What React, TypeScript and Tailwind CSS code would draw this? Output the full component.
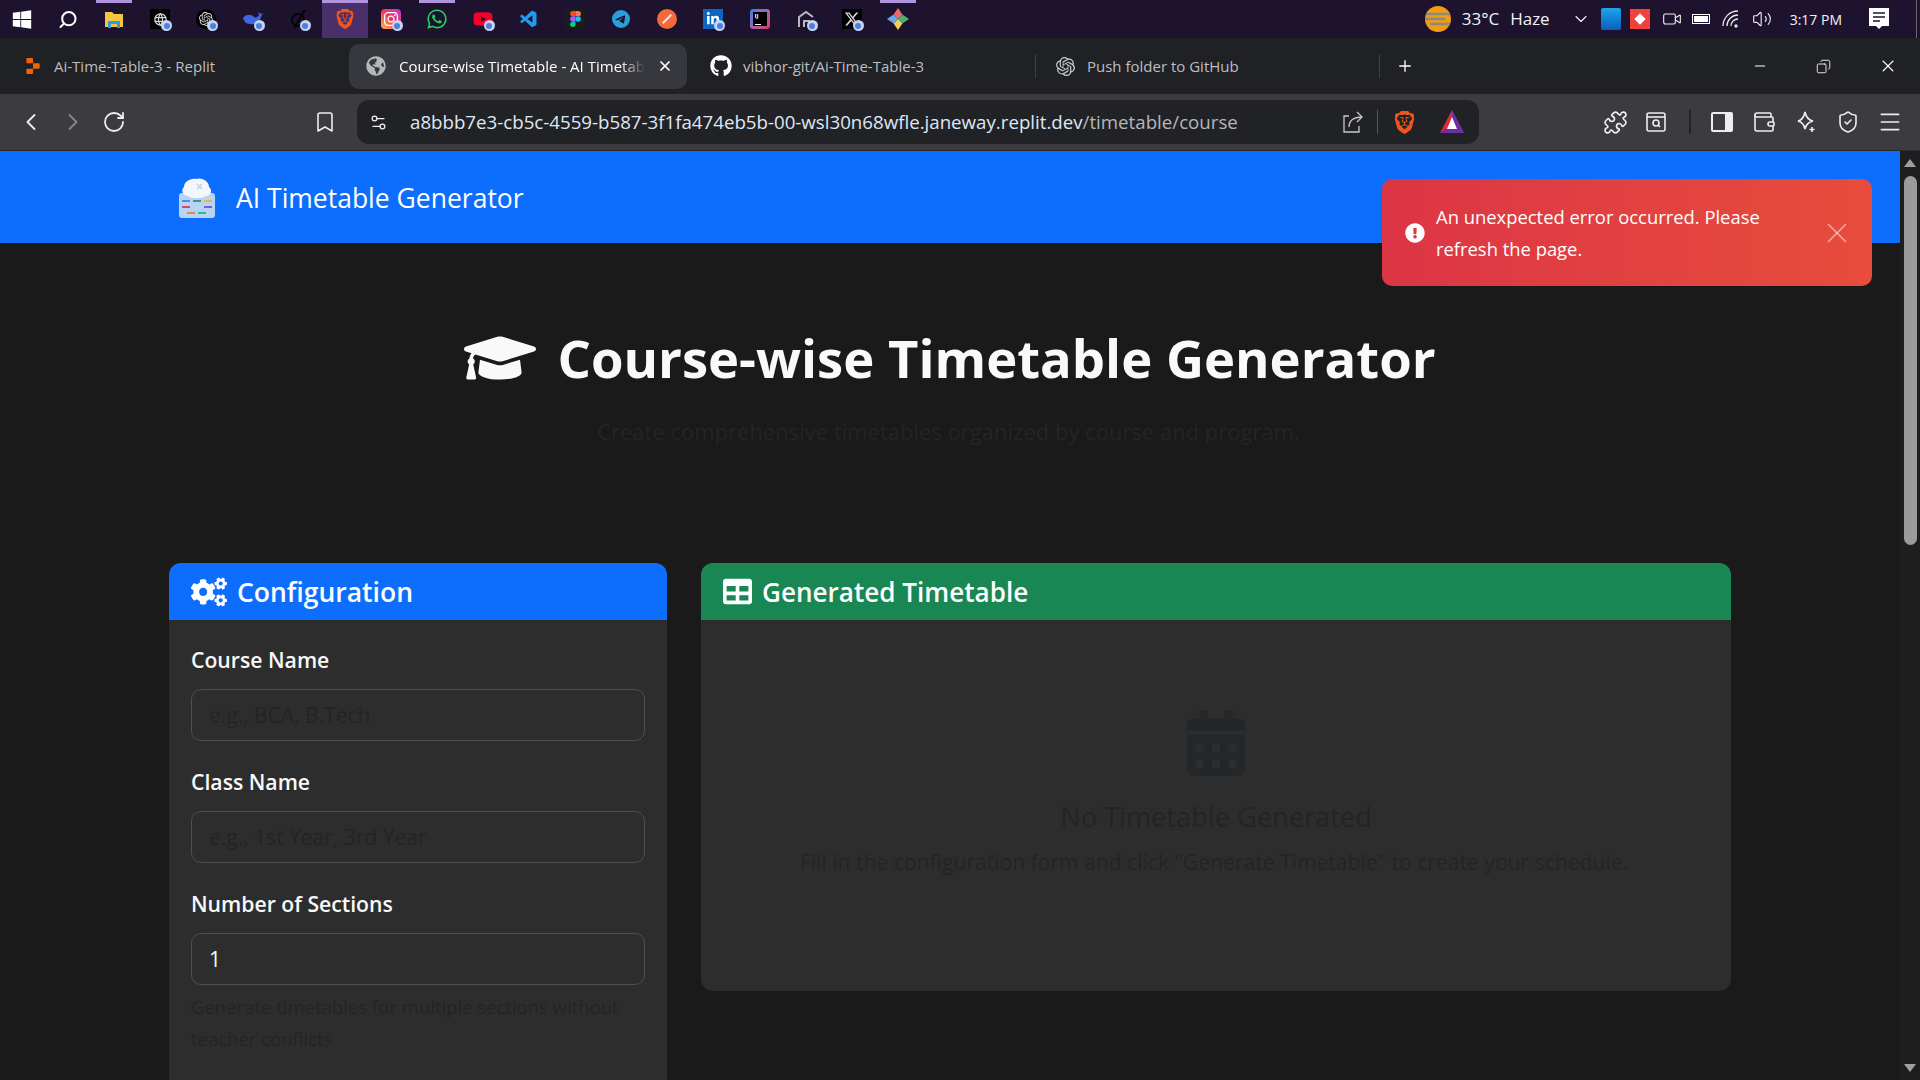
import type { ReactNode } from "react";
import {
  Bookmark,
  ChevronDown,
  ChevronLeft,
  ChevronRight,
  Copy,
  Menu,
  Minus,
  Plus,
  Puzzle,
  RotateCw,
  Search,
  Settings2,
  ShieldCheck,
  Video,
  Volume2,
  Wallet,
  X,
} from "lucide-react";
import {
  FaCalendarAlt,
  FaCogs,
  FaExclamationCircle,
  FaGithub,
  FaGlobeAmericas,
  FaGraduationCap,
  FaLinkedinIn,
  FaTable,
  FaWhatsapp,
  FaWindows,
  FaYoutube,
} from "react-icons/fa";
import { FaXTwitter } from "react-icons/fa6";
import { SiBrave, SiInstagram, SiOpenai, SiReplit, SiTelegram } from "react-icons/si";
import { VscVscode } from "react-icons/vsc";
import { TbWorld } from "react-icons/tb";

// little chromium badge on the pinned web apps
function Badge() {
  return (
    <span className="absolute right-[-2px] bottom-[-2px] flex h-[11px] w-[11px] items-center justify-center rounded-full bg-[#c5d4f2]">
      <span className="h-[6px] w-[6px] rounded-full bg-[#4f7fdc]" />
    </span>
  );
}

function TaskIcon({ children, badge, mark, active }: { children: ReactNode; badge?: boolean; mark?: boolean; active?: boolean }) {
  return (
    <div className={`relative flex h-[38px] w-[46.1px] shrink-0 items-center justify-center ${active ? "bg-[#4b2f6b]" : ""}`}>
      {mark && <div className={`absolute top-0 h-[3px] bg-[#b094dc] ${active ? "inset-x-0" : "left-[5px] right-[5px]"}`} />}
      <div className="relative flex h-5 w-5 items-center justify-center">
        {children}
        {badge && <Badge />}
      </div>
    </div>
  );
}

function Taskbar() {
  return (
    <div className="flex h-[38px] shrink-0 items-center bg-[#1e132e] text-white">
      <div className="ml-[-1px] flex">
        <TaskIcon><FaWindows size={21} /></TaskIcon>
        <TaskIcon><Search size={21} strokeWidth={2.4} className="-scale-x-100" /></TaskIcon>
        <TaskIcon mark>
          <svg viewBox="0 0 20 20" className="h-5 w-5">
            <path d="M1 3h7l2 2h9v13H1z" fill="#f4c542" />
            <path d="M4 12h12v7h-3v-4H7v4H4z" fill="#2f9be0" />
          </svg>
        </TaskIcon>
        <TaskIcon badge>
          <div className="flex h-5 w-5 items-center justify-center bg-black"><TbWorld size={15} className="text-[#d8d8d8]" /></div>
        </TaskIcon>
        <TaskIcon badge>
          <div className="flex h-5 w-5 items-center justify-center rounded-full bg-black"><SiOpenai size={14} className="text-[#d8d8d8]" /></div>
        </TaskIcon>
        <TaskIcon badge>
          <svg viewBox="0 0 20 20" className="h-5 w-5">
            <path d="M0 9c3-4 8-4 11-1 2 1 4 0 5-2l-1-3 3 2 2-1-2 4c-1 5-6 8-11 7-4 0-6-3-7-6z" fill="#4166e0" />
          </svg>
        </TaskIcon>
        <TaskIcon badge>
          <svg viewBox="0 0 20 20" className="h-5 w-5" fill="none" stroke="#050505" strokeWidth="2">
            <circle cx="9" cy="11" r="6" />
            <path d="M5 19L16 1" />
          </svg>
        </TaskIcon>
        <TaskIcon mark active><SiBrave size={20} className="text-[#f2541b]" /></TaskIcon>
        <TaskIcon badge>
          <div className="flex h-5 w-5 items-center justify-center rounded-[4px] bg-gradient-to-tr from-[#fdb72c] via-[#f0325a] to-[#b92bd6]"><SiInstagram size={14} /></div>
        </TaskIcon>
        <TaskIcon mark><FaWhatsapp size={22} className="text-[#25cf62]" /></TaskIcon>
        <TaskIcon badge><FaYoutube size={22} className="text-[#f4002a]" /></TaskIcon>
        <TaskIcon><VscVscode size={21} className="text-[#1f9cf0]" /></TaskIcon>
        <TaskIcon>
          <div className="flex h-5 w-5 items-center justify-center bg-[#1c1c1c]">
            <svg viewBox="0 0 12 18" className="h-4 w-[11px]">
              <path d="M6 0H3a3 3 0 000 6h3z" fill="#f24e1e" />
              <path d="M6 0h3a3 3 0 010 6H6z" fill="#ff7262" />
              <path d="M6 6H3a3 3 0 000 6h3z" fill="#a259ff" />
              <circle cx="9" cy="9" r="3" fill="#1abcfe" />
              <path d="M6 12H3a3 3 0 103 3z" fill="#0acf83" />
            </svg>
          </div>
        </TaskIcon>
        <TaskIcon><SiTelegram size={18} className="text-[#2a9fd8]" /></TaskIcon>
        <TaskIcon>
          <div className="flex h-5 w-5 items-center justify-center rounded-full bg-[#f4693a]">
            <div className="h-[2px] w-3 -rotate-45 bg-[#fde3d8]" />
          </div>
        </TaskIcon>
        <TaskIcon badge>
          <div className="flex h-5 w-5 items-center justify-center bg-[#0a66c2]"><FaLinkedinIn size={14} /></div>
        </TaskIcon>
        <TaskIcon>
          <div className="h-5 w-5 rounded-[3px] bg-gradient-to-br from-[#0a7bf0] to-[#e0245e] p-[3px]">
            <div className="flex h-full w-full flex-col justify-between bg-black px-[2px] py-[1px] text-[6px] leading-[7px] font-bold">
              <span>IJ</span>
              <span className="h-px w-[6px] bg-white" />
            </div>
          </div>
        </TaskIcon>
        <TaskIcon badge>
          <svg viewBox="0 0 20 20" className="h-5 w-5" fill="none" stroke="#b9b9c2" strokeWidth="2">
            <path d="M3 18V8l7-5 7 5" />
            <path d="M8 18v-6h5v3" />
          </svg>
        </TaskIcon>
        <TaskIcon badge>
          <div className="flex h-5 w-5 items-center justify-center bg-black"><FaXTwitter size={16} className="text-[#d5d5d5]" /></div>
        </TaskIcon>
        <TaskIcon mark>
          <svg viewBox="0 0 20 20" className="h-[22px] w-[22px] shrink-0">
            <path d="M10 10L6 6l4-6 4 6z" fill="#ea6a6a" />
            <path d="M10 10l4-4 6 4-6 4z" fill="#4fb069" />
            <path d="M10 10l4 4-4 6-4-6z" fill="#f2cf57" />
            <path d="M10 10l-4 4-6-4 6-4z" fill="#6aa6ea" />
          </svg>
        </TaskIcon>
      </div>

      <div className="ml-auto flex items-center text-[#f2f2f2]">
        <svg viewBox="0 0 28 28" className="mr-[10px] h-7 w-7">
          <circle cx="14" cy="14" r="13" fill="#f29c12" />
          <path d="M2 9h24M1 14h20M6 19h20" stroke="#8c8a80" strokeWidth="2.5" />
        </svg>
        <span className="text-[17px] whitespace-nowrap">33°C</span>
        <span className="ml-[11px] text-[17px]">Haze</span>
        <ChevronDown size={20} strokeWidth={1.3} className="ml-[21px]" />
        <div className="ml-[10px] h-[22px] w-5 rounded-[2px] bg-gradient-to-b from-[#1fa5ee] to-[#0b5fb8]" />
        <div className="ml-[9px] flex h-5 w-5 items-center justify-center bg-[#f0413a]">
          <div className="h-2 w-2 rotate-45 bg-white" />
        </div>
        <Video size={20} strokeWidth={1.3} className="ml-[12px]" />
        <div className="ml-[10px] flex h-[20px] w-[20px] items-center">
          <div className="h-[10px] w-[18px] border border-white p-px"><div className="h-full w-full bg-white" /></div>
        </div>
        <svg viewBox="0 0 20 20" className="ml-[9px] h-[20px] w-[20px]" fill="none" stroke="#e8e8e8" strokeWidth="1.3">
          <path d="M2 17a15 15 0 0115-15" />
          <path d="M6 17a11 11 0 0111-11" />
          <path d="M10 17a7 7 0 017-7" />
          <circle cx="15" cy="17" r="1" fill="#e8e8e8" />
        </svg>
        <Volume2 size={20} strokeWidth={1.3} className="ml-[11px]" />
        <span className="ml-[18px] text-[14px] whitespace-nowrap">3:17 PM</span>
        <svg viewBox="0 0 20 22" className="ml-[27px] h-[22px] w-5" fill="#fff">
          <path d="M0 0h20v18h-7l-3 3-3-3H0z" />
          <path d="M4 5h12M4 9h12M4 13h7" stroke="#1e132e" strokeWidth="1.4" />
        </svg>
        <div className="ml-[27px] h-[38px] w-[1px] bg-[#6a6570]" />
        <div className="w-[3px]" />
      </div>
    </div>
  );
}

function Tab({ icon, label, active, className }: { icon: ReactNode; label: string; active?: boolean; className: string }) {
  return (
    <div className={`flex h-[45px] items-center rounded-[10px] ${active ? "bg-[#37383d] text-white" : "text-[#bdbec2]"} ${className}`}>
      {icon}
      <span className={`text-[15px] whitespace-nowrap ${active ? "[mask-image:linear-gradient(to_right,black_90%,transparent)]" : ""}`}>
        {label}
      </span>
      {active && <X size={16} strokeWidth={2.6} className="mr-[14px] ml-auto shrink-0" />}
    </div>
  );
}

function TabStrip() {
  return (
    <div className="flex h-[56px] shrink-0 items-center bg-[#202124] text-white">
      <Tab className="w-[349px] pl-[25px]" icon={<SiReplit size={16} className="mr-[13px] text-[#f26207]" />} label="Ai-Time-Table-3 - Replit" />
      <Tab
        active
        className="w-[338px] pl-[17px]"
        icon={<FaGlobeAmericas size={20} className="mr-[13px] shrink-0 text-[#b5b6ba]" />}
        label="Course-wise Timetable - AI Timetab"
      />
      <Tab className="ml-[23px] w-[325px]" icon={<FaGithub size={22} className="mr-[11px] text-white" />} label="vibhor-git/Ai-Time-Table-3" />
      <div className="h-[24px] w-px bg-[#3f4045]" />
      <Tab className="w-[343px] pl-[20px]" icon={<SiOpenai size={19} className="mr-[12px] text-[#c8c9cc]" />} label="Push folder to GitHub" />
      <div className="h-[24px] w-px bg-[#3f4045]" />
      <Plus size={18} strokeWidth={1.8} className="ml-[16px]" />
      <div className="ml-auto flex items-center">
        <Minus size={16} strokeWidth={1.5} className="mr-[48px]" />
        <Copy size={15} strokeWidth={1.4} className="mr-[47px] -scale-x-100" />
        <X size={20} strokeWidth={1.3} className="mr-[22px]" />
      </div>
    </div>
  );
}

function Toolbar() {
  return (
    <div className="flex h-[57px] shrink-0 items-center border-b border-[#2a2a2e] bg-[#3b3b40] text-[#eeeeee]">
      <ChevronLeft size={28} strokeWidth={1.6} className="ml-[17px]" />
      <ChevronRight size={28} strokeWidth={1.6} className="ml-[14px] text-[#85858a]" />
      <RotateCw size={24} strokeWidth={1.8} className="ml-[15px]" />
      <Bookmark size={24} strokeWidth={1.6} className="ml-[187px]" />
      <div className="ml-[20px] flex h-[44px] w-[1122px] items-center rounded-[12px] bg-[#212226]">
        <Settings2 size={19} strokeWidth={1.6} className="ml-[12px]" />
        <span className="ml-[22px] text-[18.7px] whitespace-nowrap text-[#dfe7f5]">
          a8bbb7e3-cb5c-4559-b587-3f1fa474eb5b-00-wsl30n68wfle.janeway.replit.dev<span className="text-[#b5b6ba]">/timetable/course</span>
        </span>
        <svg viewBox="0 0 24 24" className="ml-auto h-6 w-6" fill="none" stroke="#c8c9cc" strokeWidth="1.3">
          <path d="M8 6H3v16h15v-6" />
          <path d="M8 17c0-6 4-10 13-10" />
          <path d="M16 2l5 5-5 5" />
        </svg>
        <div className="ml-[12px] h-[24px] w-px bg-[#55565a]" />
        <SiBrave size={23} className="ml-[15px] text-[#f2541b]" />
        <svg viewBox="0 0 26 26" className="mr-[14px] ml-[23px] h-[26px] w-[26px]">
          <path d="M13 1L25 24H1z" fill="#d92b3a" />
          <path d="M13 1L25 24H13z" fill="#6a2fa0" />
          <path d="M1 24l5-4h14l5 4z" fill="#6a2fa0" />
          <path d="M13 8l5 12H8z" fill="#fff" />
        </svg>
      </div>
      <div className="ml-auto flex items-center">
        <Puzzle size={25} strokeWidth={1.6} />
        <svg viewBox="0 0 24 24" className="ml-[16px] h-6 w-6" fill="none" stroke="#eeeeee" strokeWidth="1.6">
          <rect x="3" y="3" width="18" height="18" rx="2" />
          <path d="M3 7h18" />
          <circle cx="12" cy="13" r="3" />
          <path d="M14 15l2 2" />
        </svg>
        <div className="ml-[21px] h-[24px] w-[2px] bg-[#232327]" />
        <div className="ml-[20px] h-[20px] w-[22px] rounded-[2px] border-2 border-r-[8px] border-[#eeeeee]" />
        <Wallet size={24} strokeWidth={1.6} className="ml-[19px]" />
        <svg viewBox="0 0 24 24" className="ml-[18px] h-6 w-6" fill="none" stroke="#eeeeee" strokeWidth="1.6">
          <path d="M11 2c1 5 3 8 8 9-4 1-7 3-8 8-1-5-3-7-7-8 4-1 6-4 7-9z" />
          <path d="M18 17v5M15.5 19.5h5" />
        </svg>
        <ShieldCheck size={24} strokeWidth={1.6} className="ml-[18px]" />
        <Menu size={26} strokeWidth={1.5} className="mr-[17px] ml-[17px]" />
      </div>
    </div>
  );
}

function AppLogo() {
  return (
    <svg viewBox="0 0 36 42" className="h-[42px] w-9">
      <rect x="0" y="17" width="36" height="25" rx="3" fill="#b9d3f3" />
      <path d="M8 20c-5-1-6-7-3-9 0-5 6-9 12-8 6-2 13 2 13 8 4 3 2 9-3 9-6 3-13 3-19 0z" fill="#f3f6fb" />
      <path d="M18 8l5 5M23 8l-5 5" stroke="#b9d3f3" strokeWidth="1.5" />
      <rect x="3" y="24" width="8" height="2" fill="#4d8fe8" />
      <rect x="14" y="24" width="8" height="2" fill="#3f9a7a" />
      <rect x="25" y="24" width="8" height="2" fill="#e0bb3f" />
      <rect x="3" y="30" width="8" height="2" fill="#c9506a" />
      <rect x="25" y="30" width="8" height="2" fill="#7a5fd0" />
      <rect x="8" y="36" width="8" height="2" fill="#e08a4f" />
      <rect x="19" y="36" width="8" height="2" fill="#2cb8a0" />
    </svg>
  );
}

function Field({ label, placeholder, value }: { label: string; placeholder?: string; value?: string }) {
  return (
    <div>
      <label className="block text-[21.2px] leading-[32px] font-semibold text-[#f8f9fa]">{label}</label>
      <input
        readOnly
        placeholder={placeholder}
        value={value ?? ""}
        className="mt-[13px] block h-[52px] w-full rounded-[10px] border border-[#495057] bg-[#2d2d2d] px-[17px] text-[21px] text-[#f8f9fa] outline-none placeholder:text-[#212529]"
      />
    </div>
  );
}

function Scrollbar() {
  return (
    <div className="flex w-5 shrink-0 flex-col items-center bg-[#1e1e1e]">
      <div className="mt-[8px] h-0 w-0 border-x-[6px] border-b-[8px] border-x-transparent border-b-[#a0a0a0]" />
      <div className="mt-[9px] h-[369px] w-[13px] rounded-full bg-[#9b9b9b]" />
      <div className="mt-auto mb-[8px] h-0 w-0 border-x-[6px] border-t-[8px] border-x-transparent border-t-[#a0a0a0]" />
    </div>
  );
}

export default function App() {
  return (
    <div className="flex h-screen flex-col overflow-hidden bg-[#1a1a1a] font-['Open_Sans',sans-serif]">
      <Taskbar />
      <TabStrip />
      <Toolbar />

      <div className="relative flex min-h-0 flex-1">
        <main className="min-w-0 flex-1 overflow-hidden">
          {/* Navbar */}
          <nav className="flex h-[92px] items-center bg-[#0d6efd] pl-[179px] text-white">
            <AppLogo />
            <span className="ml-[21px] pt-[3px] text-[26.5px]">AI Timetable Generator</span>
          </nav>

          {/* Hero */}
          <div className="pt-[79px] text-center">
            <h1 className="flex items-center justify-center text-[52.6px] leading-[68px] font-bold text-[#f8f9fa]">
              <FaGraduationCap size={72} className="mr-[21px]" />
              Course-wise Timetable Generator
            </h1>
            <p className="mt-[21px] pr-[3px] text-[22px] leading-[32px] text-[#212529]">
              Create comprehensive timetables organized by course and program.
            </p>
          </div>

          {/* Cards */}
          <div className="mx-auto mt-[116px] flex w-[1562px] items-start gap-[34px]">
            <section className="w-[498px] shrink-0 rounded-[12px] bg-[#2d2d2d]">
              <header className="flex h-[57px] items-center rounded-t-[12px] bg-[#0d6efd] pl-[22px] text-white">
                <FaCogs size={36} />
                <h2 className="ml-[10px] pt-[2px] text-[26.5px] font-semibold">Configuration</h2>
              </header>
              <div className="flex flex-col gap-[25px] px-[22px] pt-[24px] pb-[200px]">
                <Field label="Course Name" placeholder="e.g., BCA, B.Tech" />
                <Field label="Class Name" placeholder="e.g., 1st Year, 3rd Year" />
                <div>
                  <Field label="Number of Sections" value="1" />
                  <p className="mt-[6px] text-[18.5px] leading-[32px] text-[#212529]">
                    Generate timetables for multiple sections without teacher conflicts
                  </p>
                </div>
              </div>
            </section>

            <section className="flex h-[428px] min-w-0 flex-1 flex-col rounded-[12px] bg-[#2d2d2d]">
              <header className="flex h-[57px] shrink-0 items-center rounded-t-[12px] bg-[#198754] pl-[22px] text-white">
                <FaTable size={29} />
                <h2 className="ml-[10px] pt-[2px] text-[26.1px] font-semibold">Generated Timetable</h2>
              </header>
              <div className="flex flex-col items-center pt-[90px] text-[#212529]">
                <FaCalendarAlt size={66} className="text-[#24272a]" />
                <h3 className="mt-[21px] text-[27.2px] leading-[40px] font-medium">No Timetable Generated</h3>
                <p className="mt-[9px] pr-[4px] text-[21.1px] leading-[32px]">
                  Fill in the configuration form and click "Generate Timetable" to create your schedule.
                </p>
              </div>
            </section>
          </div>
        </main>

        <Scrollbar />

        {/* Toast */}
        <div className="absolute top-[28px] right-[48px] flex h-[107px] w-[490px] items-center rounded-[10px] bg-gradient-to-r from-[#dc3545] to-[#e74c3c] pl-[23px] text-white">
          <FaExclamationCircle size={20} className="shrink-0" />
          <p className="ml-[11px] w-[350px] text-[18.4px] leading-[32px]">An unexpected error occurred. Please refresh the page.</p>
          <X size={34} strokeWidth={1.2} className="mr-[18px] ml-auto text-white/50" />
        </div>
      </div>
    </div>
  );
}
